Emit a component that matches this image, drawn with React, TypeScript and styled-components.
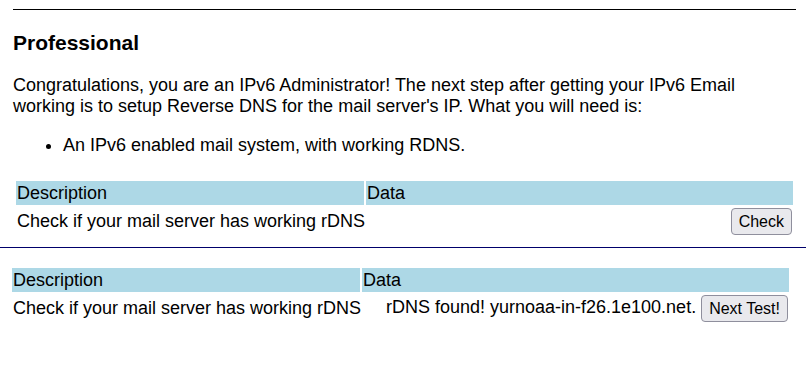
import React from 'react';
import styled, {createGlobalStyle} from 'styled-components';

const GlobalStyle = createGlobalStyle`
    body {
        margin: 0;
        background: #fff;
        color: #000;
        font-family: "Liberation Sans", Arial, sans-serif;
        font-size: 18px;
    }
`;

const Section = styled.div`
    width: 783px;
    padding: 9px 0 0 13px;
`;

const Rule = styled.hr<{color?: string}>`
    margin: 0;
    height: 0;
    border: none;
    border-top: 1px solid ${(p) => p.color || '#000'};
`;

const PageRule = styled(Rule)`
    margin-top: 9px;
`;

const Heading = styled.h3`
    margin: 21px 0 0;
    font-size: 21px;
    line-height: 24px;
    font-weight: bold;
`;

const Text = styled.p`
    margin: 20px 0 0;
    line-height: 21px;
`;

const List = styled.ul`
    margin: 18px 0 0;
    padding-left: 50px;
    line-height: 21px;
`;

const Table = styled.table<{offset: number; top: number}>`
    width: 781px;
    margin: ${(p) => p.top}px 0 0 ${(p) => p.offset}px;
    border-spacing: 2px;
    table-layout: fixed;
    font-size: 18px;
`;

const Th = styled.th<{w?: number}>`
    width: ${(p) => (p.w ? `${p.w}px` : 'auto')};
    height: 24px;
    padding: 0 1px;
    background: #add8e6;
    text-align: left;
    font-weight: normal;
    line-height: 21px;
`;

const Td = styled.td<{right?: boolean}>`
    padding: 1px;
    text-align: ${(p) => (p.right ? 'right' : 'left')};
    vertical-align: middle;
    white-space: nowrap;
    line-height: 21px;
`;

const Button = styled.button`
    height: 27px;
    padding: 0 7px;
    font-family: "Liberation Sans", Arial, sans-serif;
    font-size: 16px;
    color: #000;
    background: #e9e9ed;
    border: 1px solid #8f8f9d;
    border-radius: 4px;
    vertical-align: middle;
    cursor: pointer;
`;

type Row = {description: string; data?: string; action: string};

function CheckTable({row, offset, top}: {row: Row; offset: number; top: number}) {
    return (
        <Table offset={offset} top={top}>
            <thead>
                <tr>
                    <Th w={346}>Description</Th>
                    <Th>Data</Th>
                </tr>
            </thead>
            <tbody>
                <tr>
                    <Td>{row.description}</Td>
                    <Td right>
                        {row.data && <>{row.data} </>}
                        <Button>{row.action}</Button>
                    </Td>
                </tr>
            </tbody>
        </Table>
    );
}

export default function App() {
    return (
        <>
            <GlobalStyle />
            <Section>
                <Rule />
                <Heading>Professional</Heading>
                <Text>
                    Congratulations, you are an IPv6 Administrator! The next step after getting your IPv6 Email
                    working is to setup Reverse DNS for the mail server's IP. What you will need is:
                </Text>
                <List>
                    <li>An IPv6 enabled mail system, with working RDNS.</li>
                </List>
            </Section>
            <CheckTable
                offset={14}
                top={23}
                row={{description: 'Check if your mail server has working rDNS', action: 'Check'}}
            />
            <PageRule color="#00006b" />
            <CheckTable
                offset={10}
                top={18}
                row={{
                    description: 'Check if your mail server has working rDNS',
                    data: 'rDNS found! yurnoaa-in-f26.1e100.net.',
                    action: 'Next Test!',
                }}
            />
        </>
    );
}
